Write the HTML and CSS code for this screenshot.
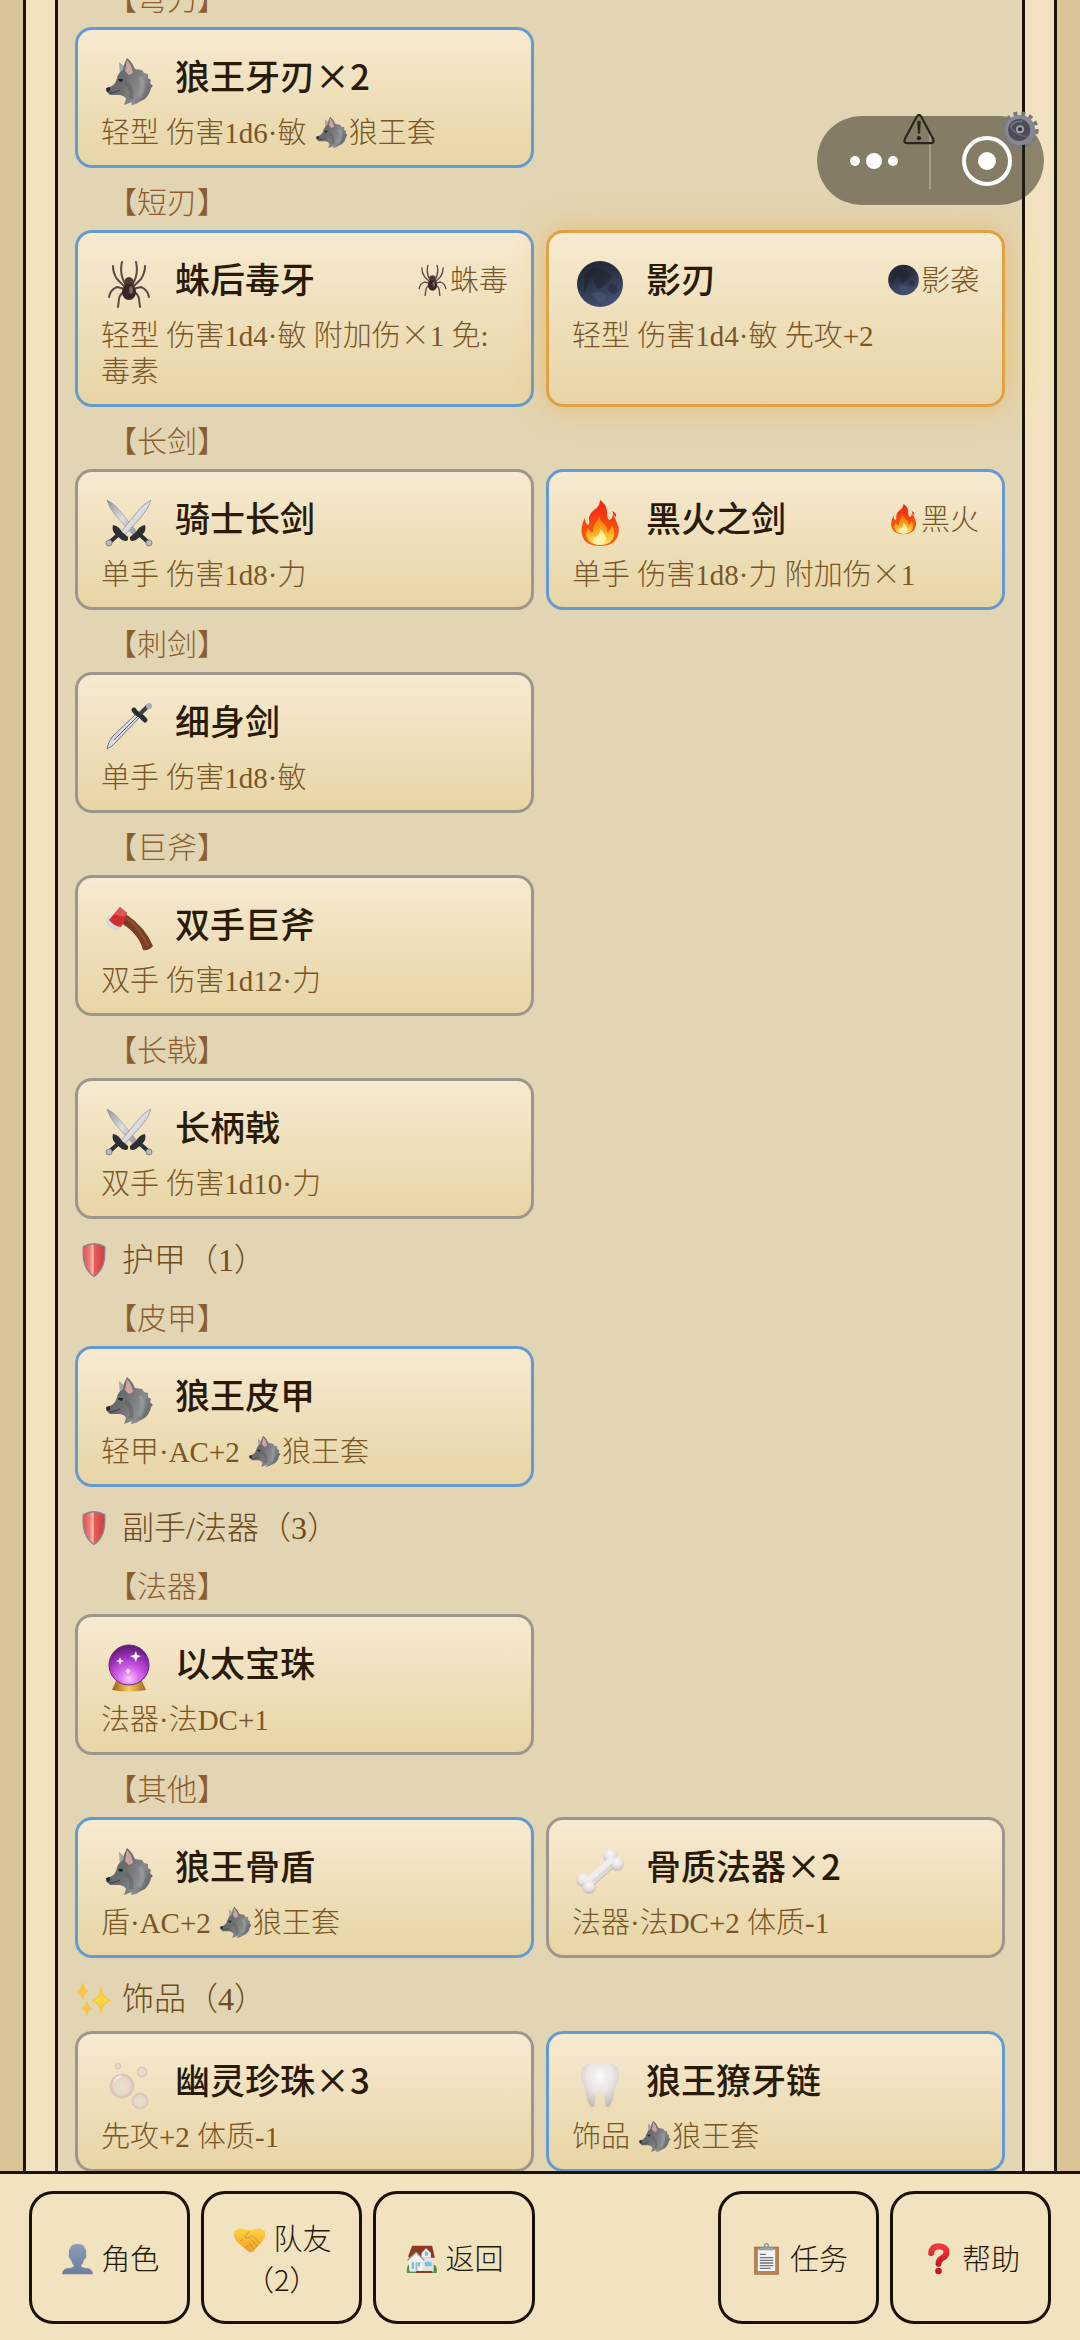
FILE: index.html
```html
<!DOCTYPE html>
<html lang="zh-CN">
<head>
  <meta charset="UTF-8">
  <meta name="viewport" content="width=device-width, initial-scale=1.0">
  <title>背包</title>
  <link rel="stylesheet" href="styles.css">
</head>
<body>
  <!-- 图标 -->
  <svg class="sprite" aria-hidden="true">
    <defs>
      <linearGradient id="g-wolf" x1="0" y1="0" x2="1" y2="0.4">
        <stop offset="0" stop-color="#5d5e62"/><stop offset="0.5" stop-color="#6c6d70"/><stop offset="0.85" stop-color="#8b8c8e"/><stop offset="1" stop-color="#6e6f72"/>
      </linearGradient>
      <linearGradient id="g-moon" x1="0" y1="0" x2="0.4" y2="1">
        <stop offset="0" stop-color="#20242c"/><stop offset="0.5" stop-color="#2b3344"/><stop offset="1" stop-color="#414e70"/>
      </linearGradient>
      <linearGradient id="g-steel" x1="0" y1="0" x2="1" y2="1">
        <stop offset="0" stop-color="#8d9196"/><stop offset="0.5" stop-color="#dcdfe3"/><stop offset="1" stop-color="#8a8e94"/>
      </linearGradient>
      <linearGradient id="g-fire" x1="0" y1="0" x2="0" y2="1">
        <stop offset="0" stop-color="#ef2218"/><stop offset="0.55" stop-color="#fb4a0c"/><stop offset="1" stop-color="#f5620c"/>
      </linearGradient>
      <linearGradient id="g-flame" x1="0" y1="0" x2="0" y2="1">
        <stop offset="0" stop-color="#fc6a10"/><stop offset="0.6" stop-color="#ffab1c"/><stop offset="1" stop-color="#ffe868"/>
      </linearGradient>
      <linearGradient id="g-shield" x1="0" y1="0" x2="1" y2="0">
        <stop offset="0" stop-color="#e2524f"/><stop offset="0.3" stop-color="#ef7a75"/><stop offset="0.45" stop-color="#f8c0b8"/><stop offset="0.52" stop-color="#e85c58"/><stop offset="1" stop-color="#cf3b3d"/>
      </linearGradient>
      <radialGradient id="g-orb" cx="0.5" cy="0.85" r="0.85">
        <stop offset="0" stop-color="#f9c8ff"/><stop offset="0.3" stop-color="#d869f0"/><stop offset="0.65" stop-color="#a032bd"/><stop offset="1" stop-color="#571a70"/>
      </radialGradient>
      <linearGradient id="g-gold" x1="0" y1="0" x2="1" y2="0">
        <stop offset="0" stop-color="#9a5b17"/><stop offset="0.5" stop-color="#f7cf5e"/><stop offset="1" stop-color="#a3641c"/>
      </linearGradient>
      <radialGradient id="g-white" cx="0.5" cy="0.3" r="0.75">
        <stop offset="0" stop-color="#fbfafa"/><stop offset="0.5" stop-color="#e6e3e1"/><stop offset="1" stop-color="#bcb5ae"/>
      </radialGradient>
      <radialGradient id="g-bubble" cx="0.5" cy="0.5" r="0.5">
        <stop offset="0" stop-color="#e9dfcc"/><stop offset="0.7" stop-color="#e6d8c6"/><stop offset="0.9" stop-color="#e0c2b8"/><stop offset="1" stop-color="#dcb8b0"/>
      </radialGradient>
      <linearGradient id="g-star" x1="0" y1="0" x2="0" y2="1">
        <stop offset="0" stop-color="#f7b83a"/><stop offset="0.5" stop-color="#fbdc3c"/><stop offset="1" stop-color="#f2b45a"/>
      </linearGradient>
      <linearGradient id="g-user" x1="0" y1="0" x2="0" y2="1">
        <stop offset="0" stop-color="#8c9cb9"/><stop offset="1" stop-color="#6c7d9e"/>
      </linearGradient>
      <linearGradient id="g-hand" x1="0" y1="0" x2="0" y2="1">
        <stop offset="0" stop-color="#ffd246"/><stop offset="1" stop-color="#efa023"/>
      </linearGradient>
      <linearGradient id="g-red" x1="0" y1="0" x2="0" y2="1">
        <stop offset="0" stop-color="#f0393f"/><stop offset="1" stop-color="#c9171f"/>
      </linearGradient>
    </defs>

    <symbol id="wolf" viewBox="0 0 48 48">
      <path d="M14 5 19 9 20 16 15 19Z" fill="#a9a5a3"/>
      <path d="M22 1Q19 6 18 13 13 16 12 21 11 26 7 29L2 31Q0 33 2 35L5 38 15 38Q20 39 21 42L19 48 27 45 26 48Q32 47 34 45L40 42Q45 37 46 31L48 29 45 26 46 23 43 21 43 17 39 16 37 13 30 12Q27 5 22 1Z" fill="url(#g-wolf)"/>
      <path d="M22 3Q27 8 28 16L24 18 20 14Z" fill="#cfa4a0"/>
      <path d="M35 20Q41 29 34 40" fill="none" stroke="#a2a3a5" stroke-width="4" opacity="0.5"/>
      <path d="M20 26Q28 30 26 42" fill="none" stroke="#55565a" stroke-width="4" opacity="0.4"/>
      <path d="M1 31 5 30 5 34 2 35Z" fill="#29292c"/>
      <path d="M4 36Q10 36 15 33" fill="none" stroke="#3e3f43" stroke-width="1"/>
      <path d="M13 22 18 22 17 25 14 24Z" fill="#222226"/>
    </symbol>
    <symbol id="spider" viewBox="0 0 48 48">
      <g fill="none" stroke="#5b4a44" stroke-width="2" stroke-linecap="round" stroke-linejoin="round">
        <path d="M21 25Q14 15 17 2M20 27 12 19Q8 13 8 6M20 29 12 27Q5 30 4 37M21 31Q15 33 14 39L13 47"/>
        <path d="M27 25Q34 15 31 2M28 27 36 19Q40 13 40 6M28 29 36 27Q43 30 44 37M27 31Q33 33 34 39L35 47"/>
      </g>
      <ellipse cx="24" cy="23" rx="5" ry="6" fill="#4c3b37"/>
      <ellipse cx="24" cy="32" rx="7" ry="8" fill="#372724"/>
      <ellipse cx="26" cy="30" rx="2" ry="4" fill="#7a625b"/>
    </symbol>
    <symbol id="moon" viewBox="0 0 48 48">
      <circle cx="24" cy="24" r="23" fill="url(#g-moon)"/>
      <path d="M9 14Q16 5 25 9T35 16 28 26 18 22 11 27 9 14ZM33 24Q41 22 41 30T32 30Z" fill="#191d25" opacity="0.4"/>
      <path d="M16 34Q24 29 31 36L27 42Q20 42 16 34Z" fill="#4c5a7d" opacity="0.5"/>
    </symbol>
    <symbol id="swords" viewBox="0 0 48 48">
      <path d="M2 1Q10 5 15 12L33 34 29 37 11 17Q4 9 2 1Z" fill="url(#g-steel)" stroke="#8d9196" stroke-width="0.6"/>
      <path d="M46 1Q38 5 33 12L15 34 19 37 37 17Q44 9 46 1Z" fill="url(#g-steel)" stroke="#7d8187" stroke-width="0.6"/>
      <path d="M8 26Q14 27 17 33L23 38Q24 44 17 41L12 37Q6 32 8 26ZM40 26Q34 27 31 33L25 38Q24 44 31 41L36 37Q42 32 40 26Z" fill="#2c2f32"/>
      <path d="M14 35 5 43M34 35 43 43" stroke="#2c2f32" stroke-width="4"/>
      <circle cx="4" cy="44" r="3" fill="#b9bcc0" stroke="#808489"/>
      <circle cx="44" cy="44" r="3" fill="#b9bcc0" stroke="#808489"/>
    </symbol>
    <symbol id="sword" viewBox="0 0 48 48">
      <path d="M2 47Q3 40 7 35L32 11 35 15 12 39Q7 45 2 47Z" fill="url(#g-steel)" stroke="#75797e" stroke-width="1"/>
      <path d="M9 38 34 13" stroke="#5d6166" stroke-width="1"/>
      <path d="M29 8Q31 12 35 13L40 18" fill="none" stroke="#2c2f32" stroke-width="5" stroke-linecap="round"/>
      <path d="M35 12 43 4" stroke="#3e4146" stroke-width="4"/>
      <circle cx="44" cy="4" r="3" fill="#a9adb2"/>
    </symbol>
    <symbol id="fire" viewBox="0 0 48 48">
      <path d="M24 1Q31 6 31 13 31 19 33 21 36 21 37 15 39 19 41 24 44 30 42 36 39 47 24 47 9 47 6 36 4 28 9 19 9 24 12 26 14 25 13 20 13 15 18 11 24 7 24 1Z" fill="url(#g-fire)"/>
      <path d="M23 15Q23 20 27 24 32 28 31 33 35 31 36 26 40 34 37 40 33 46 24 46 14 46 11 39 9 34 12 29 14 34 17 33 17 27 20 23 23 20 23 15Z" fill="url(#g-flame)"/>
      <path d="M24 30Q30 36 30 40 29 46 24 46 18 46 17 41 17 38 20 38 24 36 24 30Z" fill="#fff3a8"/>
      <path d="M36 12Q41 14 40 18 37 16 36 12Z" fill="#ef2218"/>
    </symbol>
    <symbol id="axe" viewBox="0 0 48 48">
      <path d="M1 15Q1 24 13 26L17 19 7 9Q2 10 1 15Z" fill="#d9d8d8"/>
      <path d="M16 14 22 10Q40 22 48 41 44 46 38 45 34 29 16 18Z" fill="#7b3f24"/>
      <path d="M22 13Q36 24 43 41" fill="none" stroke="#935336" stroke-width="2"/>
      <path d="M4 15 15 2 22 8 21 13 16 22Q10 22 4 15Z" fill="#cf2d30"/>
      <path d="M15 2 22 8 19 12 9 9Z" fill="#e0535a"/>
    </symbol>
    <symbol id="shield" viewBox="0 0 48 48">
      <path d="M24 1Q32 1 39 5 40 20 37 30 32 43 24 47 16 43 11 30 8 20 9 5 16 1 24 1Z" fill="url(#g-shield)" stroke="#8c8288" stroke-width="2"/>
    </symbol>
    <symbol id="orb" viewBox="0 0 48 48">
      <path d="M11 37H37L41 46Q24 49 7 46Z" fill="url(#g-gold)"/>
      <circle cx="24" cy="21" r="20" fill="url(#g-orb)" stroke="#6a2583" stroke-width="1"/>
      <path d="M31 7 32 11 36 12 32 14 31 18 29 14 25 12 29 11ZM15 13 16 16 19 17 16 18 15 21 14 18 11 17 14 16ZM23 24 24 26 26 27 24 28 23 30 22 28 20 27 22 26Z" fill="#fff"/>
    </symbol>
    <symbol id="bone" viewBox="0 0 48 48">
      <path d="M14 36 36 15" stroke="#dedad6" stroke-width="10"/>
      <circle cx="7" cy="33" r="7" fill="url(#g-white)"/>
      <circle cx="13" cy="40" r="7" fill="url(#g-white)"/>
      <circle cx="34" cy="9" r="7" fill="url(#g-white)"/>
      <circle cx="41" cy="17" r="7" fill="url(#g-white)"/>
      <path d="M12 33 35 13" stroke="#efedeb" stroke-width="6" stroke-linecap="round"/>
      <path d="M18 38 37 21" stroke="#bdb6ad" stroke-width="1"/>
    </symbol>
    <symbol id="bubbles" viewBox="0 0 48 48">
      <g fill="url(#g-bubble)" stroke="#dfc6bb" stroke-width="1">
        <circle cx="17" cy="25" r="12"/><circle cx="35" cy="40" r="8"/><circle cx="37" cy="11" r="5"/><circle cx="13" cy="5" r="3"/>
      </g>
      <path d="M9 21Q11 16 17 15" fill="none" stroke="#f3e8da" stroke-width="2"/>
    </symbol>
    <symbol id="tooth" viewBox="0 0 48 48">
      <path d="M6 7Q12 0 24 4 36 0 42 7 45 18 39 27 38 38 34 45 30 48 29 43L28 33Q24 28 20 33L19 43Q18 48 14 45 10 38 9 27 3 18 6 7Z" fill="url(#g-white)"/>
    </symbol>
    <symbol id="sparkles" viewBox="0 0 48 48">
      <path d="M34 7Q35 22 47 26 35 30 34 45 33 30 22 26 33 22 34 7ZM8 2Q9 11 15 13 9 15 8 24 7 15 1 13 7 11 8 2ZM14 28Q15 36 21 37 15 39 14 47 13 39 7 37 13 36 14 28Z" fill="url(#g-star)" stroke="#f5c746" stroke-width="2" stroke-linejoin="round"/>
    </symbol>
    <symbol id="user" viewBox="0 0 48 48">
      <path d="M24 1Q38 1 37 17 38 22 34 25 32 32 29 34 31 37 40 38 47 40 47 47H1Q1 40 8 38 17 37 19 34 16 32 14 25 10 22 11 17 10 1 24 1Z" fill="url(#g-user)"/>
    </symbol>
    <symbol id="handshake" viewBox="0 0 48 48">
      <path d="M1 12 9 8 24 11 39 8 47 12Q49 22 42 29L30 42Q25 46 20 41L6 29Q-1 22 1 12Z" fill="url(#g-hand)"/>
      <path d="M24 12 17 21Q21 25 28 19L40 31M27 25 36 35M23 29 31 39M10 27 14 24M17 37 23 34" fill="none" stroke="#c67b13" stroke-width="1" stroke-linejoin="round"/>
    </symbol>
    <symbol id="house" viewBox="0 0 48 48">
      <path d="M2 42Q2 34 6 32V42ZM42 42V32Q47 34 47 42Z" fill="#4d8a43"/>
      <path d="M2 40H47V45H2Z" fill="#5b9148"/>
      <path d="M6 20H42V43H6Z" fill="#e4e3e0"/>
      <path d="M10 4H40L44 22H22L16 15 6 23 4 20Z" fill="#8c3a22"/>
      <path d="M24 15 31 8 38 15V22H24Z" fill="#f1f1ef"/>
      <path d="M5 25 16 14 26 25V41H6Z" fill="#f4f3f1"/>
      <path d="M3 26 16 14 28 26" fill="none" stroke="#9c9792" stroke-width="2"/>
      <path d="M29 13H34V19H29ZM29 28H39V35H29ZM9 29H13V39H9ZM18 29H22V35H18Z" fill="#6dc5df"/>
      <path d="M15 29H18V41H15Z" fill="#b2b6b8"/>
      <path d="M16 42H40V45H16Z" fill="#8c3a22"/>
    </symbol>
    <symbol id="clipboard" viewBox="0 0 48 48">
      <path d="M6 6H42V47H6Z" fill="#b9824f" stroke="#9b683a" stroke-width="1"/>
      <path d="M11 10H37V42H11Z" fill="#f4f4f6"/>
      <path d="M14 7H34V11H14Z" fill="#9fa4aa"/>
      <circle cx="24" cy="4" r="3" fill="none" stroke="#8f9399" stroke-width="2"/>
      <path d="M14 17H23M14 22H34M14 26H34M14 30H34M14 34H34M14 38H30" stroke="#6d7378" stroke-width="2"/>
    </symbol>
    <symbol id="question" viewBox="0 0 48 48">
      <path d="M13 15Q14 5 25 5 36 6 36 14 36 20 29 23 24 26 24 31" fill="none" stroke="url(#g-red)" stroke-width="9" stroke-linecap="round"/>
      <circle cx="24" cy="42" r="5" fill="#cd1820"/>
    </symbol>
    <symbol id="warning" viewBox="0 0 48 48">
      <path d="M24 4Q26 4 28 8L44 38Q46 44 41 44H7Q2 44 4 38L20 8Q22 4 24 4Z" fill="none" stroke="#2a241b" stroke-width="3"/>
      <path d="M22 13H26L25 30H23Z" fill="#2a241b" stroke="#2a241b" stroke-width="1" stroke-linejoin="round"/>
      <circle cx="24" cy="37" r="3" fill="#2a241b"/>
    </symbol>
    <symbol id="gear" viewBox="0 0 48 48">
      <circle cx="24" cy="24" r="21" fill="none" stroke="#777983" stroke-width="5" stroke-dasharray="5 5"/>
      <circle cx="24" cy="24" r="19" fill="#858792"/>
      <circle cx="23" cy="24" r="14" fill="#4a4d58"/>
      <path d="M12 20Q18 30 34 33" fill="none" stroke="#666974" stroke-width="2"/>
      <path d="M12 20Q16 12 27 13" fill="none" stroke="#777a85" stroke-width="2"/>
      <circle cx="24" cy="23" r="4" fill="#5f626d" stroke="#a5a7b0" stroke-width="2"/>
      <circle cx="24" cy="23" r="2" fill="#24262c"/>
    </symbol>
  </svg>

  <div class="page">
    <div class="frame">
      <main class="bag">
        <h3 class="subtype">【弯刀】</h3>
        <div class="items">
          <article class="item rare">
            <div class="item-head">
              <svg class="item-icon"><use href="#wolf"/></svg>
              <h4>狼王牙刃×2</h4>
            </div>
            <p>轻型 伤害1d6·敏 <svg class="emoji"><use href="#wolf"/></svg>狼王套</p>
          </article>
        </div>

        <h3 class="subtype">【短刃】</h3>
        <div class="items">
          <article class="item rare">
            <div class="item-head">
              <svg class="item-icon"><use href="#spider"/></svg>
              <h4>蛛后毒牙</h4>
              <span class="tag"><svg class="emoji"><use href="#spider"/></svg>蛛毒</span>
            </div>
            <p>轻型 伤害1d4·敏 附加伤<span class="times">×</span>1 免:毒素</p>
          </article>
          <article class="item legendary">
            <div class="item-head">
              <svg class="item-icon"><use href="#moon"/></svg>
              <h4>影刃</h4>
              <span class="tag"><svg class="emoji"><use href="#moon"/></svg>影袭</span>
            </div>
            <p>轻型 伤害1d4·敏 先攻+2</p>
          </article>
        </div>

        <h3 class="subtype">【长剑】</h3>
        <div class="items">
          <article class="item">
            <div class="item-head">
              <svg class="item-icon"><use href="#swords"/></svg>
              <h4>骑士长剑</h4>
            </div>
            <p>单手 伤害1d8·力</p>
          </article>
          <article class="item rare">
            <div class="item-head">
              <svg class="item-icon"><use href="#fire"/></svg>
              <h4>黑火之剑</h4>
              <span class="tag"><svg class="emoji"><use href="#fire"/></svg>黑火</span>
            </div>
            <p>单手 伤害1d8·力 附加伤<span class="times">×</span>1</p>
          </article>
        </div>

        <h3 class="subtype">【刺剑】</h3>
        <div class="items">
          <article class="item">
            <div class="item-head">
              <svg class="item-icon"><use href="#sword"/></svg>
              <h4>细身剑</h4>
            </div>
            <p>单手 伤害1d8·敏</p>
          </article>
        </div>

        <h3 class="subtype">【巨斧】</h3>
        <div class="items">
          <article class="item">
            <div class="item-head">
              <svg class="item-icon"><use href="#axe"/></svg>
              <h4>双手巨斧</h4>
            </div>
            <p>双手 伤害1d12·力</p>
          </article>
        </div>

        <h3 class="subtype">【长戟】</h3>
        <div class="items">
          <article class="item">
            <div class="item-head">
              <svg class="item-icon"><use href="#swords"/></svg>
              <h4>长柄戟</h4>
            </div>
            <p>双手 伤害1d10·力</p>
          </article>
        </div>

        <h2 class="category"><svg class="category-icon"><use href="#shield"/></svg>护甲（1）</h2>
        <h3 class="subtype">【皮甲】</h3>
        <div class="items">
          <article class="item rare">
            <div class="item-head">
              <svg class="item-icon"><use href="#wolf"/></svg>
              <h4>狼王皮甲</h4>
            </div>
            <p>轻甲·AC+2 <svg class="emoji"><use href="#wolf"/></svg>狼王套</p>
          </article>
        </div>

        <h2 class="category"><svg class="category-icon"><use href="#shield"/></svg>副手/法器（3）</h2>
        <h3 class="subtype">【法器】</h3>
        <div class="items">
          <article class="item">
            <div class="item-head">
              <svg class="item-icon"><use href="#orb"/></svg>
              <h4>以太宝珠</h4>
            </div>
            <p>法器·法DC+1</p>
          </article>
        </div>

        <h3 class="subtype">【其他】</h3>
        <div class="items">
          <article class="item rare">
            <div class="item-head">
              <svg class="item-icon"><use href="#wolf"/></svg>
              <h4>狼王骨盾</h4>
            </div>
            <p>盾·AC+2 <svg class="emoji"><use href="#wolf"/></svg>狼王套</p>
          </article>
          <article class="item">
            <div class="item-head">
              <svg class="item-icon"><use href="#bone"/></svg>
              <h4>骨质法器×2</h4>
            </div>
            <p>法器·法DC+2 体质-1</p>
          </article>
        </div>

        <h2 class="category"><svg class="category-icon"><use href="#sparkles"/></svg>饰品（4）</h2>
        <div class="items">
          <article class="item">
            <div class="item-head">
              <svg class="item-icon"><use href="#bubbles"/></svg>
              <h4>幽灵珍珠×3</h4>
            </div>
            <p>先攻+2 体质-1</p>
          </article>
          <article class="item rare">
            <div class="item-head">
              <svg class="item-icon"><use href="#tooth"/></svg>
              <h4>狼王獠牙链</h4>
            </div>
            <p>饰品 <svg class="emoji"><use href="#wolf"/></svg>狼王套</p>
          </article>
        </div>
      </main>
    </div>
  </div>

  <nav class="bottom-bar">
    <button type="button"><svg class="emoji"><use href="#user"/></svg> 角色</button>
    <button type="button"><svg class="emoji"><use href="#handshake"/></svg> 队友（2）</button>
    <button type="button"><svg class="emoji"><use href="#house"/></svg> 返回</button>
    <button type="button" class="task"><svg class="emoji"><use href="#clipboard"/></svg> 任务</button>
    <button type="button"><svg class="emoji"><use href="#question"/></svg> 帮助</button>
  </nav>

  <div class="capsule">
    <button type="button" aria-label="更多">
      <svg width="52" height="20" viewBox="0 0 52 20" fill="#fff"><circle cx="7" cy="10" r="5"/><circle cx="26" cy="10" r="8"/><circle cx="45" cy="10" r="5"/></svg>
    </button>
    <button type="button" aria-label="关闭">
      <svg width="50" height="50" viewBox="0 0 50 50"><circle cx="25" cy="25" r="23" fill="none" stroke="#fff" stroke-width="4"/><circle cx="25" cy="25" r="9" fill="#fff"/></svg>
    </button>
    <svg class="warning"><use href="#warning"/></svg>
    <svg class="gear"><use href="#gear"/></svg>
  </div>
</body>
</html>
```

FILE: styles.css
```css
* {
  box-sizing: border-box;
}

body {
  margin: 0;
  height: 100vh;
  display: flex;
  flex-direction: column;
  background-color: #d9c598;
  color: #241808;
  font-family: "Liberation Serif", "Noto Sans CJK SC", serif;
  font-size: 29px;
  font-weight: 300;
}

.sprite {
  position: absolute;
  width: 0;
  height: 0;
}

.page {
  flex: 1;
  min-height: 0;
  padding: 0 23px;
  overflow: hidden;
}

.frame {
  min-height: 100%;
  padding: 0 29px;
  background-color: #f1e3bf;
  border: solid #1a1206;
  border-width: 0 3px;
}

.bag {
  margin-top: -36px;
  padding: 1px 17px 40px;
  background-color: #e2d5b3;
  border: solid #1a1206;
  border-width: 0 3px;
}

h2, h3, h4, p {
  margin: 0;
  font-weight: 300;
}

.category {
  display: flex;
  align-items: center;
  gap: 9px;
  margin: 24px 0 15px;
  font-size: 32px;
  line-height: 34px;
  color: #6f4c1d;
}

.category-icon {
  width: 38px;
  height: 34px;
}

.subtype {
  margin: 20px 0 12px;
  padding-left: 32px;
  font-size: 30px;
  line-height: 30px;
  color: #8b5e2f;
}

.category + .subtype {
  margin-top: 27px;
}

.items {
  display: grid;
  grid-template-columns: repeat(2, 1fr);
  gap: 12px;
}

.item {
  padding: 14px 23px;
  background-image: linear-gradient(#f6ead0, #e7d5a5);
  border: 3px solid #9c968c;
  border-radius: 17px;
}

.item.rare {
  border-color: #659ad0;
}

.item.legendary {
  border-color: #e1a147;
  box-shadow: 0 0 34px rgba(230, 165, 50, 0.45);
}

.item-head {
  display: flex;
  align-items: center;
  height: 62px;
  margin-bottom: 9px;
}

.item-icon {
  width: 56px;
  height: 48px;
  margin: 11px 18px 0 0;
}

.item h4 {
  font-family: "Noto Sans CJK SC", sans-serif;
  font-size: 35px;
  line-height: 40px;
  font-weight: 500;
  color: #2a1b09;
}

.item p {
  line-height: 36px;
  color: #7a5626;
}

.times {
  font-family: "Noto Sans CJK SC", sans-serif;
  line-height: 1;
}

.tag {
  margin-left: auto;
  padding-top: 5px;
  line-height: 36px;
  color: #7a5626;
}

.emoji {
  width: 35px;
  height: 32px;
  vertical-align: -5px;
}

.bottom-bar {
  display: grid;
  grid-template-columns: repeat(6, 1fr);
  gap: 11px;
  padding: 17px 29px 16px;
  background-color: #f1e3bf;
  border-top: 3px solid #1a1206;
}

.bottom-bar button {
  height: 133px;
  padding: 0 17px;
  font-family: "Noto Sans CJK SC", sans-serif;
  font-size: 29px;
  font-weight: 300;
  line-height: 41px;
  color: #241808;
  background: none;
  border: 3px solid #1a1206;
  border-radius: 24px;
}

.bottom-bar .task {
  grid-column: 5;
}

.capsule {
  position: fixed;
  top: 116px;
  right: 36px;
  display: flex;
  width: 227px;
  height: 89px;
  background-color: rgba(40, 35, 25, 0.5);
  border-radius: 45px;
}

.capsule button {
  flex: 1;
  display: flex;
  align-items: center;
  justify-content: center;
  padding: 0;
  background: none;
  border: none;
}

.capsule::before {
  content: "";
  position: absolute;
  top: 16px;
  left: 112px;
  width: 2px;
  height: 57px;
  background-color: rgba(255, 255, 255, 0.25);
}

.capsule .warning {
  position: absolute;
  top: -4px;
  left: 85px;
  width: 34px;
  height: 34px;
}

.capsule .gear {
  position: absolute;
  top: -5px;
  right: 5px;
  width: 38px;
  height: 38px;
}
```
